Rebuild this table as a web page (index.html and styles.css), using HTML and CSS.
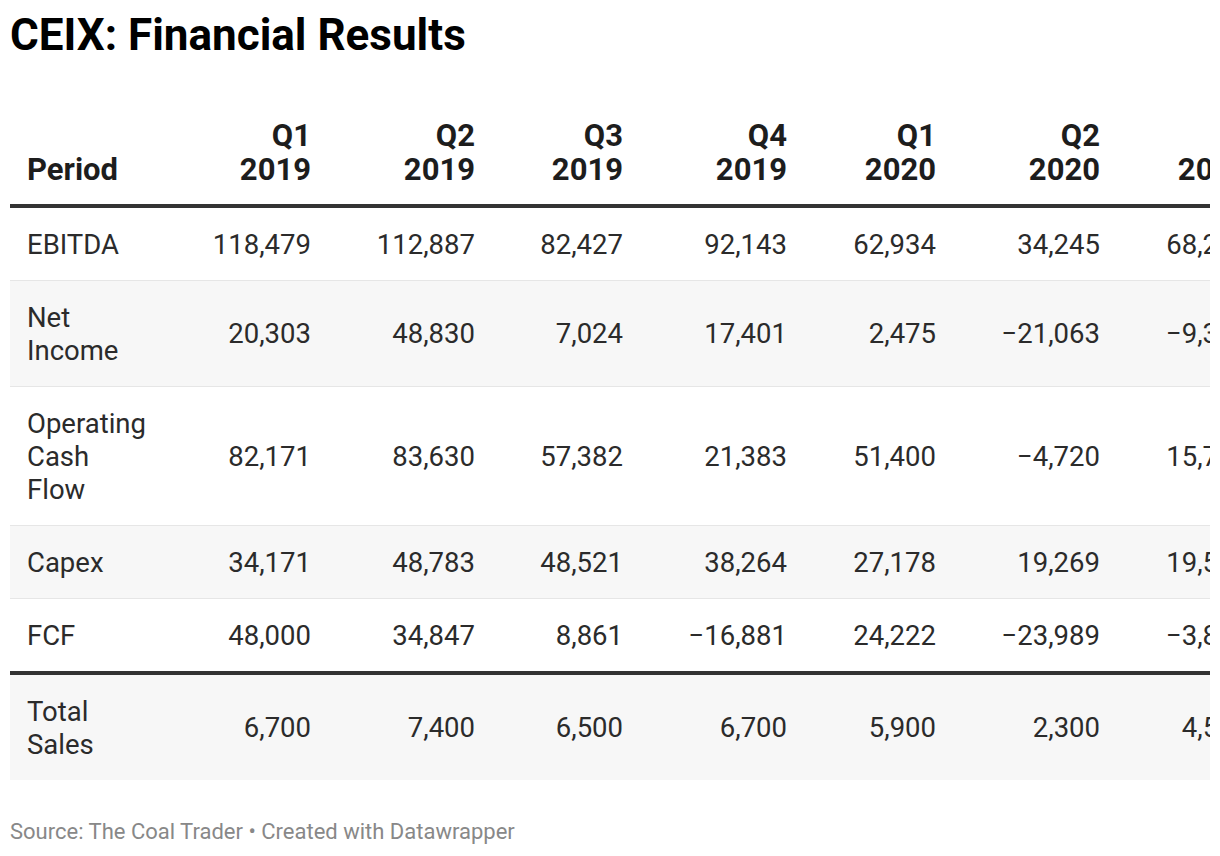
FILE: index.html
```html
<!DOCTYPE html>
<html lang="en">
<head>
<meta charset="utf-8">
<title>CEIX: Financial Results</title>
<link rel="stylesheet" href="styles.css">
</head>
<body>
<div class="chart">
  <h1 class="title">CEIX: Financial Results</h1>
  <div class="table-wrap">
    <table class="fin-table">
      <colgroup>
        <col class="w-label">
        <col class="w-7">
        <col class="w-7">
        <col class="w-6a">
        <col class="w-7">
        <col class="w-6">
        <col class="w-7">
        <col class="w-6">
      </colgroup>
      <thead>
        <tr>
          <th class="lab">Period</th>
          <th>Q1<br>2019</th>
          <th>Q2<br>2019</th>
          <th>Q3<br>2019</th>
          <th>Q4<br>2019</th>
          <th>Q1<br>2020</th>
          <th>Q2<br>2020</th>
          <th>Q3<br>2020</th>
        </tr>
      </thead>
      <tbody>
        <tr>
          <td class="lab">EBITDA</td>
          <td>118,479</td><td>112,887</td><td>82,427</td><td>92,143</td><td>62,934</td><td>34,245</td><td>68,251</td>
        </tr>
        <tr class="alt">
          <td class="lab">Net Income</td>
          <td>20,303</td><td>48,830</td><td>7,024</td><td>17,401</td><td>2,475</td><td>−21,063</td><td>−9,362</td>
        </tr>
        <tr>
          <td class="lab">Operating Cash Flow</td>
          <td>82,171</td><td>83,630</td><td>57,382</td><td>21,383</td><td>51,400</td><td>−4,720</td><td>15,738</td>
        </tr>
        <tr class="alt">
          <td class="lab">Capex</td>
          <td>34,171</td><td>48,783</td><td>48,521</td><td>38,264</td><td>27,178</td><td>19,269</td><td>19,524</td>
        </tr>
        <tr class="last">
          <td class="lab">FCF</td>
          <td>48,000</td><td>34,847</td><td>8,861</td><td>−16,881</td><td>24,222</td><td>−23,989</td><td>−3,812</td>
        </tr>
        <tr class="alt total">
          <td class="lab">Total Sales</td>
          <td>6,700</td><td>7,400</td><td>6,500</td><td>6,700</td><td>5,900</td><td>2,300</td><td>4,500</td>
        </tr>
      </tbody>
    </table>
  </div>
  <div class="footer">Source: The Coal Trader • Created with Datawrapper</div>
</div>
</body>
</html>
```

FILE: styles.css
```css
* { box-sizing: border-box; }

html, body {
  margin: 0;
  padding: 0;
  background: #ffffff;
}

body {
  font-family: Roboto, "Liberation Sans", Arial, sans-serif;
  color: #333333;
}

.chart {
  padding: 8px 10px 0 10px;
}

.title {
  margin: 0;
  font-size: 44px;
  line-height: 54px;
  font-weight: 700;
  color: #000000;
}

.table-wrap {
  margin-top: 20px;
  width: 1200px;
  overflow: hidden;
}

.fin-table {
  table-layout: fixed;
  width: 1239px;
  border-collapse: collapse;
  border-spacing: 0;
}

.w-label { width: 137px; }
.w-7 { width: 164px; }
.w-6a { width: 148px; }
.w-6 { width: 149px; }

.fin-table th {
  font-size: 31px;
  line-height: 34px;
  font-weight: 700;
  color: #1d1d1d;
  text-align: right;
  vertical-align: bottom;
  padding: 37px 0 17px 0;
  border-bottom: 4px solid #333333;
  white-space: nowrap;
}

.fin-table td {
  font-size: 27.5px;
  line-height: 33px;
  color: #2b2b2b;
  text-align: right;
  vertical-align: middle;
  padding: 19.5px 0;
  border-bottom: 1px solid #e6e6e6;
  white-space: nowrap;
}

.fin-table th.lab,
.fin-table td.lab {
  text-align: left;
  padding-left: 17px;
  white-space: normal;
}

.fin-table tr.alt td {
  background: #f7f7f7;
}

.fin-table tr.last td {
  border-bottom: 4px solid #333333;
}

.fin-table tr.total td {
  border-bottom: none;
}

.footer {
  margin-top: 39px;
  font-size: 22px;
  line-height: 26px;
  color: #888888;
}
```
